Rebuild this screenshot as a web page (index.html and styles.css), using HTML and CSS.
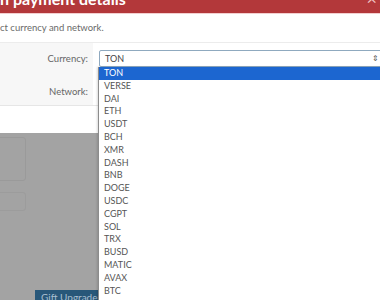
FILE: index.html
```html
<!DOCTYPE html>
<html lang="en">
<head>
  <meta charset="UTF-8">
  <title>Payment details</title>
  <link rel="stylesheet" href="styles.css">
</head>
<body>
  <div class="page">
    <div class="modal">
      <div class="modal-header">
        <h3 class="modal-title">n payment details</h3>
        <span class="modal-close">&times;</span>
      </div>
      <div class="modal-intro">ct currency and network.</div>
      <div class="form">
        <div class="form-row">
          <label class="form-label">Currency:</label>
          <div class="form-field">
            <div class="select">TON <span class="select-arrows">&#8661;</span></div>
          </div>
        </div>
        <div class="form-row">
          <label class="form-label">Network:</label>
          <div class="form-field"></div>
        </div>
      </div>
      <div class="modal-footer"></div>
    </div>

    <!-- page behind the backdrop -->
    <div class="behind">
      <div class="ghost-box"></div>
      <div class="ghost-input"></div>
      <div class="ghost-btn">Gift Upgrade</div>
    </div>

    <ul class="dropdown">
      <li class="active">TON</li>
      <li>VERSE</li>
      <li>DAI</li>
      <li>ETH</li>
      <li>USDT</li>
      <li>BCH</li>
      <li>XMR</li>
      <li>DASH</li>
      <li>BNB</li>
      <li>DOGE</li>
      <li>USDC</li>
      <li>CGPT</li>
      <li>SOL</li>
      <li>TRX</li>
      <li>BUSD</li>
      <li>MATIC</li>
      <li>AVAX</li>
      <li>BTC</li>
    </ul>
  </div>
</body>
</html>
```

FILE: styles.css
```css
body {
  margin: 0;
  font-family: Lato, "Open Sans", sans-serif;
  background-color: #a3a3a3;
}

.page {
  position: relative;
  width: 380px;
  height: 300px;
  overflow: hidden;
}

.modal {
  background-color: #fff;
}

.modal-header {
  height: 13px;
  background-color: #b3383a;
  border-bottom: 1px solid #f3cfcf;
  overflow: hidden;
  display: flex;
  justify-content: space-between;
}

.modal-title {
  margin: -11px 0 0 0;
  font-size: 16px;
  line-height: 20px;
  font-weight: 700;
  color: #fff;
}

.modal-close {
  margin-top: -11px;
  margin-right: 3px;
  font-size: 18px;
  line-height: 18px;
  color: #f0c4c4;
}

.modal-intro {
  height: 28px;
  line-height: 27px;
  font-size: 9.5px;
  color: #6a6a6a;
  border-bottom: 1px solid #ececec;
}

.form {
  background: linear-gradient(to right, #f7f7f7 93px, #fff 93px);
  padding: 7px 0 5px;
  border-bottom: 1px solid #e6e6e6;
}

.form-row {
  display: flex;
  align-items: center;
  height: 17px;
  margin-bottom: 16px;
}

.form-row:last-child {
  margin-bottom: 0;
}

.form-label {
  width: 88px;
  text-align: right;
  font-size: 9.5px;
  color: #666;
}

.form-field {
  margin-left: 11px;
  flex: 1;
}

.select {
  position: relative;
  height: 15px;
  line-height: 15px;
  border: 1px solid #8fa9bf;
  border-radius: 2px;
  margin-right: -4px;
  padding-left: 5px;
  font-size: 9px;
  color: #444;
}

.select-arrows {
  position: absolute;
  right: 4px;
  top: 0;
  font-size: 8px;
  color: #555;
}

.modal-footer {
  height: 27px;
}

.behind {
  position: relative;
  height: 160px;
}

.ghost-box {
  position: absolute;
  left: -10px;
  top: 4px;
  width: 34px;
  height: 42px;
  border: 1px solid #9a9a9a;
  border-radius: 3px;
}

.ghost-input {
  position: absolute;
  left: -10px;
  top: 59px;
  width: 34px;
  height: 17px;
  border: 1px solid #9c9c9c;
  border-radius: 3px;
}

.ghost-btn {
  position: absolute;
  left: 35px;
  top: 157px;
  width: 60px;
  height: 20px;
  padding-left: 6px;
  background-color: #285779;
  color: #a9bfd0;
  font-size: 10px;
  line-height: 14px;
}

.dropdown {
  position: absolute;
  left: 98px;
  top: 67px;
  width: 290px;
  height: 240px;
  margin: 0;
  padding: 0;
  list-style: none;
  background-color: #fff;
  border-left: 1px solid #8c8c8c;
  box-shadow: -1px 0 2px rgba(0,0,0,0.15);
}

.dropdown li {
  height: 12.8px;
  line-height: 12.8px;
  padding-left: 5px;
  font-size: 9px;
  color: #555;
}

.dropdown li.active {
  background-color: #1c66d0;
  color: #fff;
}
```
